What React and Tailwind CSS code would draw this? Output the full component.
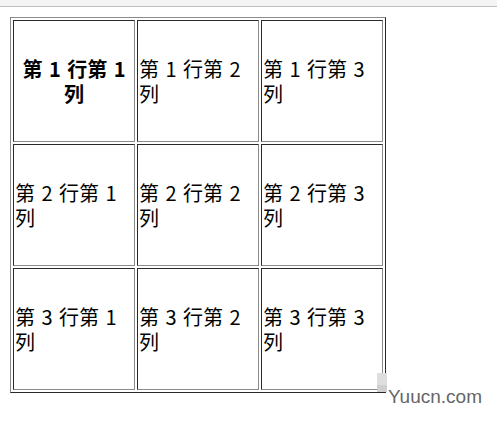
export default function App() {
  const rows = [1, 2, 3];
  const cols = [1, 2, 3];
  const cell =
    "w-[122px] h-[122px] p-px align-middle border border-solid border-t-[#2a2a2a] border-l-[#2a2a2a] border-r-[#8a8a8a] border-b-[#8a8a8a] text-[20px] leading-[25px] text-black [word-spacing:2px]";
  return (
    <div
      className="relative w-[497px] h-[429px] bg-white overflow-hidden"
      style={{ fontFamily: '"Noto Sans CJK SC", "Noto Sans", sans-serif' }}
    >
      <div className="h-[7px] bg-[#f4f4f4] border-b border-[#bdbdbd]" />
      <table className="mt-[10px] ml-[10px] border-separate border-spacing-[2px] border border-solid border-t-[#8a8a8a] border-l-[#8a8a8a] border-r-[#2a2a2a] border-b-[#2a2a2a]">
        <tbody>
          {rows.map((r) => (
            <tr key={r}>
              {cols.map((c) =>
                r === 1 && c === 1 ? (
                  <th key={c} className={cell + " font-bold text-center"}>
                    {`第 ${r} 行第 ${c} 列`}
                  </th>
                ) : (
                  <td key={c} className={cell + " text-left"}>
                    {`第 ${r} 行第 ${c} 列`}
                  </td>
                )
              )}
            </tr>
          ))}
        </tbody>
      </table>
      <div className="absolute left-[377px] top-[373px] w-[10px] h-[19px] flex flex-col">
        <div className="h-[12px] bg-[#dedede]" />
        <div className="h-[7px] bg-[#cfcfcf]" />
      </div>
      <div
        className="absolute left-[388px] top-[386px] text-[19px] leading-[22px] text-[#666666]"
        style={{ fontFamily: '"Liberation Sans", Arial, sans-serif' }}
      >
        Yuucn.com
      </div>
    </div>
  );
}
